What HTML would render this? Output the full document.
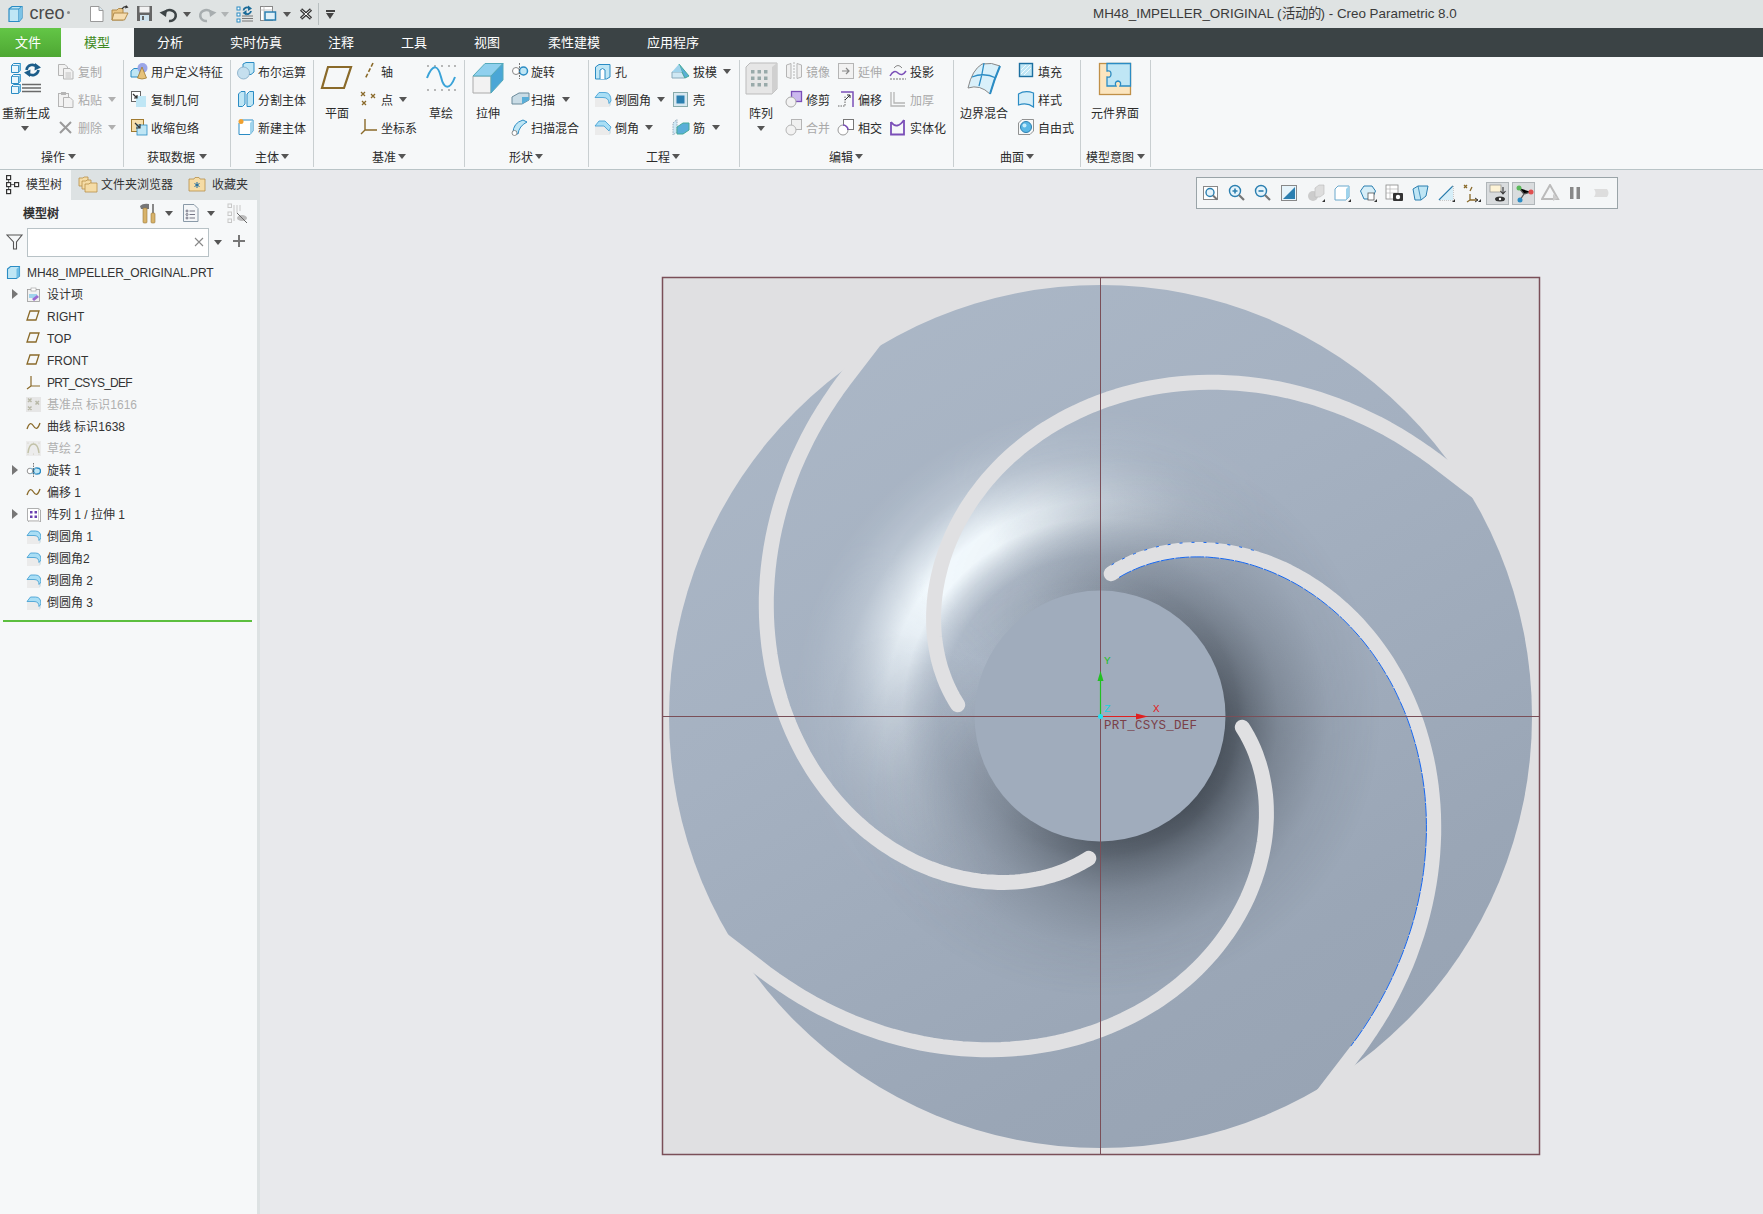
<!DOCTYPE html>
<html lang="zh-CN"><head><meta charset="utf-8"><style>
*{margin:0;padding:0;box-sizing:border-box}
html,body{width:1763px;height:1214px;overflow:hidden;background:#e8e9ec;font-family:"Liberation Sans",sans-serif;color:#333}
.abs{position:absolute}
#title{left:0;top:0;width:1763px;height:28px;background:#dfe3e3}
#tabs{left:0;top:28px;width:1763px;height:29px;background:#3b4345}
.tab{position:absolute;top:0;height:29px;line-height:29px;font-size:13px;color:#fff;text-align:center}
#ribbon{left:0;top:57px;width:1763px;height:113px;background:#f6f8f9;border-bottom:1px solid #b9c4c7}
.t{position:absolute;font-size:12px;line-height:14px;white-space:nowrap;color:#2b2b2b}
.tt{position:absolute;font-size:12px;line-height:16px;white-space:nowrap;color:#2b2b2b}
.g{color:#a9a9a9}
.dd{position:absolute;width:0;height:0;border-style:solid;border-width:5px 4px 0 4px;border-color:#555 transparent transparent transparent}
.sep{position:absolute;top:60px;width:1px;height:107px;background:#c9cfd1}
#left{left:0;top:170px;width:257px;height:1044px;background:#f6f8f9}
#lstrip{left:257px;top:170px;width:3px;height:1044px;background:#dde2e3}
#ltabs{left:0;top:170px;width:257px;height:30px;background:#dde2e3}
#disk{border-radius:50%;overflow:hidden;background:linear-gradient(150deg,#adb9c8 0%,#a5b1c1 38%,#9aa6b6 75%,#96a2b2 100%)}
#hl{left:calc(50% - 330px);top:calc(50% - 330px);width:660px;height:660px;
 background:conic-gradient(from 0deg, rgba(244,251,255,.45) 0deg, rgba(244,251,255,.15) 22deg, rgba(244,251,255,0) 45deg, rgba(244,251,255,0) 205deg, rgba(244,251,255,.05) 230deg, rgba(244,251,255,.17) 252deg, rgba(244,251,255,.42) 273deg, rgba(244,251,255,.82) 293deg, rgba(244,251,255,1) 308deg, rgba(244,251,255,1) 328deg, rgba(244,251,255,.75) 345deg, rgba(244,251,255,.45) 360deg);
 -webkit-mask-image:radial-gradient(circle closest-side, rgba(0,0,0,.08) 126px, rgba(0,0,0,.15) 160px, rgba(0,0,0,.52) 180px, #000 198px, #000 215px, rgba(0,0,0,.65) 235px, rgba(0,0,0,.27) 260px, rgba(0,0,0,.07) 290px, transparent 310px);mask-image:radial-gradient(circle closest-side, rgba(0,0,0,.08) 126px, rgba(0,0,0,.15) 160px, rgba(0,0,0,.52) 180px, #000 198px, #000 215px, rgba(0,0,0,.65) 235px, rgba(0,0,0,.27) 260px, rgba(0,0,0,.07) 290px, transparent 310px)}
#sh{left:calc(50% - 330px);top:calc(50% - 330px);width:660px;height:660px;
 background:conic-gradient(from 0deg, rgba(72,80,90,.3) 0deg, rgba(72,80,90,.58) 45deg, rgba(72,80,90,.95) 95deg, rgba(72,80,90,1) 135deg, rgba(72,80,90,.85) 180deg, rgba(72,80,90,.4) 225deg, rgba(72,80,90,.08) 270deg, rgba(72,80,90,0) 295deg, rgba(72,80,90,.12) 330deg, rgba(72,80,90,.3) 360deg);
 -webkit-mask-image:radial-gradient(circle closest-side, #000 125px, rgba(0,0,0,.9) 138px, rgba(0,0,0,.75) 148px, rgba(0,0,0,.42) 178px, rgba(0,0,0,.12) 228px, transparent 280px);mask-image:radial-gradient(circle closest-side, #000 125px, rgba(0,0,0,.9) 138px, rgba(0,0,0,.75) 148px, rgba(0,0,0,.42) 178px, rgba(0,0,0,.12) 228px, transparent 280px)}
</style></head><body>
<!-- TITLE BAR -->
<div id="title" class="abs">
 <svg class="abs" style="left:6px;top:5px" width="18" height="18" viewBox="0 0 18 18">
  <path d="M3 4 L6 1.5 L16 1.5 L16 13 L13 16.5 L3 16.5 Z" fill="#bfe6f5" stroke="#2b8cc4" stroke-width="1.2"/>
  <path d="M3 4 L13 4 L13 16.5 M13 4 L16 1.5" fill="none" stroke="#2b8cc4" stroke-width="1.2"/>
  <path d="M13 4 L16 1.5 L16 13 L13 16.5Z" fill="#7cc3e6"/>
 </svg>
 <div class="abs" style="left:29.5px;top:4px;font-size:18px;line-height:18px;color:#4a4a4a">creo</div>
 <div class="abs" style="left:66.5px;top:10.5px;width:3px;height:3px;border-radius:50%;background:#888"></div>
 <!-- new -->
 <svg class="abs" style="left:89px;top:5px" width="16" height="18"><path d="M1.5 1.5 H10 L14 5.5 V16.5 H1.5Z" fill="#fff" stroke="#999"/><path d="M10 1.5 V5.5 H14" fill="#d8e8f0" stroke="#999"/></svg>
 <!-- open -->
 <svg class="abs" style="left:111px;top:5px" width="19" height="17"><path d="M1 5 H6 L7.5 3.5 H12 V15 H1Z" fill="#e9c585" stroke="#b08a4a"/><path d="M3 8 H17 L13.5 15 H1Z" fill="#f6ddb0" stroke="#b08a4a"/><path d="M11 4 Q13 0.5 16 2" fill="none" stroke="#333" stroke-width="1.2"/><path d="M15 0 L17.5 2.5 L14 3.5Z" fill="#333"/></svg>
 <!-- save -->
 <svg class="abs" style="left:136px;top:5px" width="17" height="17"><rect x="1" y="1" width="15" height="15" fill="#666"/><rect x="3.5" y="1.5" width="10" height="6" fill="#f2f2f2"/><rect x="4" y="10" width="9" height="6" fill="#cfe3ee"/><rect x="6" y="11" width="2" height="4" fill="#666"/></svg>
 <!-- undo -->
 <svg class="abs" style="left:159px;top:6px" width="19" height="17"><path d="M5 8 A6 5.5 0 1 1 10 15" fill="none" stroke="#3d4446" stroke-width="2.6"/><path d="M0.5 6.5 L8 3.5 L7 11Z" fill="#3d4446"/></svg>
 <div class="abs dd" style="left:183px;top:12px;border-top-color:#555"></div>
 <!-- redo -->
 <svg class="abs" style="left:198px;top:6px" width="19" height="17"><path d="M14 8 A6 5.5 0 1 0 9 15" fill="none" stroke="#a7adaf" stroke-width="2.6"/><path d="M18.5 6.5 L11 3.5 L12 11Z" fill="#a7adaf"/></svg>
 <div class="abs dd" style="left:221px;top:12px;border-top-color:#b0b4b5"></div>
 <!-- regen -->
 <svg class="abs" style="left:236px;top:5px" width="18" height="18"><g fill="#fff" stroke="#2b8cc4" stroke-width="1"><rect x="1" y="2" width="3" height="3"/><rect x="1" y="8" width="3" height="3"/><rect x="1" y="14" width="3" height="3"/></g><path d="M6 11 H17 M6 13.5 H17 M6 16 H17" stroke="#777" stroke-width="1"/><path d="M7.5 5.5 A3.5 3.5 0 0 1 13.5 3.5" fill="none" stroke="#1a6a98" stroke-width="1.8"/><path d="M12 0.5 L16 3.5 L12 6Z" fill="#1a6a98"/><path d="M15 6 A3.5 3.5 0 0 1 9 8" fill="none" stroke="#1a6a98" stroke-width="1.8"/><path d="M10.5 5 L6.5 8 L10.5 10.5Z" fill="#1a6a98"/></svg>
 <!-- windows -->
 <svg class="abs" style="left:259px;top:5px" width="18" height="18"><rect x="1.5" y="1.5" width="12" height="14" fill="#fff" stroke="#888"/><path d="M1.5 5 H13.5 M5 1.5 V15.5" stroke="#bbb" stroke-width=".8"/><rect x="6" y="7" width="10.5" height="8" fill="#dff0f8" stroke="#2b7fb0" stroke-width="1.5"/></svg>
 <div class="abs dd" style="left:283px;top:12px;border-top-color:#555"></div>
 <!-- close -->
 <svg class="abs" style="left:299px;top:8px" width="14" height="12"><path d="M2 1.5 L12 10.5 M12 1.5 L2 10.5" stroke="#333" stroke-width="3.2"/><path d="M2.5 2 L11.5 10 M11.5 2 L2.5 10" stroke="#fff" stroke-width="1"/></svg>
 <div class="abs" style="left:318px;top:3px;width:1px;height:22px;background:#b8bfc0"></div>
 <div class="abs" style="left:326px;top:10px;width:9px;height:1.5px;background:#444"></div><div class="abs dd" style="left:326px;top:13px;border-top-color:#444;border-width:6px 4.5px 0 4.5px"></div>
 <div class="abs" style="left:1093px;top:6px;font-size:13.4px;line-height:16px;color:#3a3a3a;white-space:nowrap">MH48_IMPELLER_ORIGINAL (活动的) - Creo Parametric 8.0</div>
</div>
<!-- TABS -->
<div id="tabs" class="abs">
 <div class="tab" style="left:0;width:61px;padding-right:5px;background:linear-gradient(#63c646,#4ea733)">文件</div>
 <div class="tab" style="left:61px;width:73px;padding-right:2px;background:#f6f8f9;color:#3f8a22">模型</div>
 <div class="tab" style="left:150px;width:40px">分析</div>
 <div class="tab" style="left:222px;width:68px">实时仿真</div>
 <div class="tab" style="left:321px;width:40px">注释</div>
 <div class="tab" style="left:394px;width:40px">工具</div>
 <div class="tab" style="left:467px;width:40px">视图</div>
 <div class="tab" style="left:540px;width:68px">柔性建模</div>
 <div class="tab" style="left:639px;width:68px">应用程序</div>
</div>

<div id="ribbon" class="abs"></div>
<!-- RIBBON -->
<div class="abs" style="left:0;top:0;width:1763px;height:169px">
<div class="sep" style="left:123px"></div>
<div class="sep" style="left:230px"></div>
<div class="sep" style="left:313px"></div>
<div class="sep" style="left:464px"></div>
<div class="sep" style="left:588px"></div>
<div class="sep" style="left:739px"></div>
<div class="sep" style="left:953px"></div>
<div class="sep" style="left:1080px"></div>
<div class="sep" style="left:1150px"></div>
<div class="t" style="left:41px;top:150.5px">操作</div>
<div class="dd" style="left:68px;top:154px;border-top-color:#555"></div>
<div class="t" style="left:147px;top:150.5px">获取数据</div>
<div class="dd" style="left:199px;top:154px;border-top-color:#555"></div>
<div class="t" style="left:255px;top:150.5px">主体</div>
<div class="dd" style="left:281px;top:154px;border-top-color:#555"></div>
<div class="t" style="left:372px;top:150.5px">基准</div>
<div class="dd" style="left:398px;top:154px;border-top-color:#555"></div>
<div class="t" style="left:509px;top:150.5px">形状</div>
<div class="dd" style="left:535px;top:154px;border-top-color:#555"></div>
<div class="t" style="left:646px;top:150.5px">工程</div>
<div class="dd" style="left:672px;top:154px;border-top-color:#555"></div>
<div class="t" style="left:829px;top:150.5px">编辑</div>
<div class="dd" style="left:855px;top:154px;border-top-color:#555"></div>
<div class="t" style="left:1000px;top:150.5px">曲面</div>
<div class="dd" style="left:1026px;top:154px;border-top-color:#555"></div>
<div class="t" style="left:1086px;top:150.5px">模型意图</div>
<div class="dd" style="left:1137px;top:154px;border-top-color:#555"></div>
<div class="t" style="left:2.0px;top:106.5px;width:48px;text-align:center">重新生成</div>
<div class="t" style="left:325.0px;top:106.5px;width:24px;text-align:center">平面</div>
<div class="t" style="left:429.0px;top:106.5px;width:24px;text-align:center">草绘</div>
<div class="t" style="left:475.5px;top:106.5px;width:24px;text-align:center">拉伸</div>
<div class="t" style="left:749.0px;top:106.5px;width:24px;text-align:center">阵列</div>
<div class="t" style="left:960.0px;top:106.5px;width:48px;text-align:center">边界混合</div>
<div class="t" style="left:1090.5px;top:106.5px;width:48px;text-align:center">元件界面</div>
<div class="dd" style="left:21px;top:126px;border-top-color:#555"></div>
<div class="dd" style="left:757px;top:126px;border-top-color:#555"></div>
<div class="t g" style="left:78px;top:65.5px">复制</div>
<div class="t g" style="left:78px;top:93.5px">粘贴</div>
<div class="t g" style="left:78px;top:121.5px">删除</div>
<div class="t" style="left:151px;top:65.5px">用户定义特征</div>
<div class="t" style="left:151px;top:93.5px">复制几何</div>
<div class="t" style="left:151px;top:121.5px">收缩包络</div>
<div class="t" style="left:258px;top:65.5px">布尔运算</div>
<div class="t" style="left:258px;top:93.5px">分割主体</div>
<div class="t" style="left:258px;top:121.5px">新建主体</div>
<div class="t" style="left:381px;top:65.5px">轴</div>
<div class="t" style="left:381px;top:93.5px">点</div>
<div class="t" style="left:381px;top:121.5px">坐标系</div>
<div class="t" style="left:531px;top:65.5px">旋转</div>
<div class="t" style="left:531px;top:93.5px">扫描</div>
<div class="t" style="left:531px;top:121.5px">扫描混合</div>
<div class="t" style="left:615px;top:65.5px">孔</div>
<div class="t" style="left:615px;top:93.5px">倒圆角</div>
<div class="t" style="left:615px;top:121.5px">倒角</div>
<div class="t" style="left:693px;top:65.5px">拔模</div>
<div class="t" style="left:693px;top:93.5px">壳</div>
<div class="t" style="left:693px;top:121.5px">筋</div>
<div class="t g" style="left:806px;top:65.5px">镜像</div>
<div class="t" style="left:806px;top:93.5px">修剪</div>
<div class="t g" style="left:806px;top:121.5px">合并</div>
<div class="t g" style="left:858px;top:65.5px">延伸</div>
<div class="t" style="left:858px;top:93.5px">偏移</div>
<div class="t" style="left:858px;top:121.5px">相交</div>
<div class="t" style="left:910px;top:65.5px">投影</div>
<div class="t g" style="left:910px;top:93.5px">加厚</div>
<div class="t" style="left:910px;top:121.5px">实体化</div>
<div class="t" style="left:1038px;top:65.5px">填充</div>
<div class="t" style="left:1038px;top:93.5px">样式</div>
<div class="t" style="left:1038px;top:121.5px">自由式</div>
<div class="dd" style="left:108px;top:97px;border-top-color:#b0b0b0"></div>
<div class="dd" style="left:108px;top:125px;border-top-color:#b0b0b0"></div>
<div class="dd" style="left:399px;top:97px;border-top-color:#555"></div>
<div class="dd" style="left:562px;top:97px;border-top-color:#555"></div>
<div class="dd" style="left:657px;top:97px;border-top-color:#555"></div>
<div class="dd" style="left:645px;top:125px;border-top-color:#555"></div>
<div class="dd" style="left:723px;top:69px;border-top-color:#555"></div>
<div class="dd" style="left:712px;top:125px;border-top-color:#555"></div>
<svg class="abs" style="left:9px;top:62px" width="36" height="34" viewBox="0 0 36 34"><g transform="translate(2,1)"><path d="M0.5 2.5 L2.5 0.5 H9.5 V7.5 L7.5 9.5 H0.5Z" fill="#eaf7fd" stroke="#2b8cc4" stroke-width="1"/><path d="M7.5 2.5 L9.5 0.5 V7.5 L7.5 9.5Z" fill="#7cc3e6"/><path d="M0.5 2.5 H7.5 V9.5" fill="none" stroke="#2b8cc4" stroke-width=".8"/></g><g transform="translate(2,12)"><path d="M0.5 2.5 L2.5 0.5 H9.5 V7.5 L7.5 9.5 H0.5Z" fill="#eaf7fd" stroke="#2b8cc4" stroke-width="1"/><path d="M7.5 2.5 L9.5 0.5 V7.5 L7.5 9.5Z" fill="#7cc3e6"/><path d="M0.5 2.5 H7.5 V9.5" fill="none" stroke="#2b8cc4" stroke-width=".8"/></g><g transform="translate(2,22)"><path d="M0.5 2.5 L2.5 0.5 H9.5 V7.5 L7.5 9.5 H0.5Z" fill="#eaf7fd" stroke="#2b8cc4" stroke-width="1"/><path d="M7.5 2.5 L9.5 0.5 V7.5 L7.5 9.5Z" fill="#7cc3e6"/><path d="M0.5 2.5 H7.5 V9.5" fill="none" stroke="#2b8cc4" stroke-width=".8"/></g><path d="M13 22.5 H32 M13 26 H32 M13 29.5 H32" stroke="#6a6a6a" stroke-width="1.5"/><path d="M17.5 8 A6 6 0 0 1 28 5" fill="none" stroke="#1c5d8a" stroke-width="2.6"/><path d="M26 1 L32 5.5 L25.5 8.5Z" fill="#1c5d8a"/><path d="M29.5 8 A6 6 0 0 1 19 11" fill="none" stroke="#1c5d8a" stroke-width="2.6"/><path d="M21 15 L15 10.5 L21.5 7.5Z" fill="#1c5d8a"/></svg>
<svg class="abs" style="left:57px;top:63px" width="18" height="17" viewBox="0 0 18 17"><g fill="#f2f2f2" stroke="#b5b5b5"><path d="M1.5 1.5 H8 L10.5 4 V12.5 H1.5Z"/><path d="M6.5 5.5 H13 L16 8.5 V16 H6.5Z"/></g><path d="M8.5 10 H14 M8.5 12 H14 M8.5 14 H14" stroke="#b5b5b5" stroke-width=".8"/></svg>
<svg class="abs" style="left:57px;top:91px" width="18" height="17" viewBox="0 0 18 17"><g fill="#f2f2f2" stroke="#b5b5b5"><rect x="1.5" y="2.5" width="10" height="13"/><path d="M6.5 6.5 H13 L16 9.5 V16.5 H6.5Z"/></g><rect x="4" y="1" width="5" height="3" fill="#b5b5b5"/></svg>
<svg class="abs" style="left:58px;top:120px" width="15" height="15" viewBox="0 0 15 15"><path d="M2 2 L13 13 M13 2 L2 13" stroke="#9a9a9a" stroke-width="2"/></svg>
<svg class="abs" style="left:130px;top:62px" width="18" height="18" viewBox="0 0 18 18"><path d="M1 9 L4 6.5 H10 V15 H1Z" fill="#bfe6f5" stroke="#2b8cc4"/><circle cx="12.5" cy="6" r="5" fill="#9aa6e8"/><path d="M12 5 L16.5 16 Q12 18 7.5 16Z" fill="#e6c27a" stroke="#a07a30" stroke-width=".8"/></svg>
<svg class="abs" style="left:130px;top:90px" width="18" height="18" viewBox="0 0 18 18"><rect x="1.5" y="1.5" width="9" height="10" fill="#fff" stroke="#666"/><rect x="6" y="6" width="10" height="11" fill="#bfe6f5"/><path d="M3 4 L7 8 M7 5 V8 H4" stroke="#333" stroke-width="1.2" fill="none"/></svg>
<svg class="abs" style="left:130px;top:118px" width="18" height="18" viewBox="0 0 18 18"><rect x="1.5" y="1.5" width="12" height="12" fill="#f6dfae" stroke="#a07a30"/><rect x="7" y="7" width="10" height="10" fill="#bfe6f5" stroke="#2b8cc4" stroke-width=".8"/><path d="M5 5 L10 10 M10 6 V10 H6" stroke="#333" stroke-width="1.2" fill="none"/></svg>
<svg class="abs" style="left:237px;top:62px" width="18" height="18" viewBox="0 0 18 18"><path d="M6 2 L9 0.5 H17 V10 L14 12.5 H6Z" fill="#bfe6f5" stroke="#2b8cc4"/><circle cx="6.5" cy="11" r="6" fill="#c5dfee" stroke="#7fa8c4" stroke-width=".8"/></svg>
<svg class="abs" style="left:237px;top:90px" width="18" height="18" viewBox="0 0 18 18"><path d="M1.5 4 L4 1.5 H8 V14 L5.5 16.5 H1.5Z" fill="#bfe6f5" stroke="#2b8cc4"/><path d="M10 4 L12.5 1.5 H16.5 V14 L14 16.5 H10Z" fill="#bfe6f5" stroke="#2b8cc4"/></svg>
<svg class="abs" style="left:237px;top:118px" width="18" height="18" viewBox="0 0 18 18"><path d="M2 5 L5 2 H16 V13 L13 16.5 H2Z" fill="#fff" stroke="#2b8cc4"/><path d="M13 5 L16 2 V13 L13 16.5Z" fill="#9fd3ec"/><circle cx="4" cy="3.5" r="2.5" fill="#f0a030"/></svg>
<svg class="abs" style="left:320px;top:65px" width="33" height="26" viewBox="0 0 33 26"><path d="M8 2 H31 L24 23 H2Z" fill="none" stroke="#8a6a2a" stroke-width="2.2"/></svg>
<svg class="abs" style="left:362px;top:62px" width="14" height="18" viewBox="0 0 14 18"><path d="M11 1 L3 17" stroke="#8a6a2a" stroke-width="1.6" stroke-dasharray="4 2"/></svg>
<svg class="abs" style="left:360px;top:91px" width="18" height="16" viewBox="0 0 18 16"><g stroke="#8a6a2a" stroke-width="1.3"><path d="M1 1 L5 5 M5 1 L1 5"/><path d="M11 3 L15 7 M15 3 L11 7"/><path d="M2 10 L6 14 M6 10 L2 14"/></g></svg>
<svg class="abs" style="left:360px;top:118px" width="18" height="18" viewBox="0 0 18 18"><path d="M5 1 V12 H17 M5 12 L1 16" fill="none" stroke="#8a6a2a" stroke-width="1.4"/></svg>
<svg class="abs" style="left:425px;top:63px" width="32" height="30" viewBox="0 0 32 30"><g fill="#999"><circle cx="3" cy="3" r=".9"/><circle cx="10" cy="3" r=".9"/><circle cx="17" cy="3" r=".9"/><circle cx="24" cy="3" r=".9"/><circle cx="30" cy="3" r=".9"/><circle cx="3" cy="27" r=".9"/><circle cx="10" cy="27" r=".9"/><circle cx="17" cy="27" r=".9"/><circle cx="24" cy="27" r=".9"/><circle cx="30" cy="27" r=".9"/></g><path d="M2 15 C8 0 13 2 16 14 C19 27 25 27 30 14" fill="none" stroke="#3aa3d8" stroke-width="2"/></svg>
<svg class="abs" style="left:471px;top:62px" width="34" height="32" viewBox="0 0 34 32"><path d="M2 14 H20 V31 H2Z" fill="#f2f2f2" stroke="#aaa"/><path d="M2 14 L14 1.5 H32 L20 14Z" fill="#8fd0ee" stroke="#5ab"/><path d="M20 14 L32 1.5 V18 L20 31Z" fill="#4aa6d6" stroke="#5ab"/></svg>
<svg class="abs" style="left:511px;top:63px" width="18" height="16" viewBox="0 0 18 16"><circle cx="5" cy="8" r="3.5" fill="#fff" stroke="#888"/><circle cx="12.5" cy="8" r="4" fill="#bfe6f5" stroke="#2b8cc4" stroke-width="1.5"/><path d="M8.5 0 V16" stroke="#555" stroke-width=".8" stroke-dasharray="2 1"/></svg>
<svg class="abs" style="left:511px;top:91px" width="19" height="16" viewBox="0 0 19 16"><path d="M1 6 L8 2 H18 V9 L11 13 H1Z" fill="#c9dce6" stroke="#6a8a9a"/><path d="M11 6 H18 V9 L11 13Z" fill="#5aaed8"/></svg>
<svg class="abs" style="left:511px;top:118px" width="18" height="18" viewBox="0 0 18 18"><path d="M2 15 Q2 5 12 2 L16 4 Q8 8 7 16Z" fill="#bfe6f5" stroke="#2b8cc4"/><circle cx="3.5" cy="15" r="2.5" fill="#fff" stroke="#777" stroke-width=".8"/></svg>
<svg class="abs" style="left:594px;top:63px" width="18" height="17" viewBox="0 0 18 17"><path d="M1.5 4 L5 1.5 H16 V14 L12.5 16 H1.5Z" fill="#bfe6f5" stroke="#2b8cc4"/><path d="M6 16 V7 Q8.5 4 11 7 V16" fill="#fff" stroke="#2b8cc4"/></svg>
<svg class="abs" style="left:594px;top:90px" width="18" height="18" viewBox="0 0 18 18"><path d="M1 7.5 H9 Q15 7.5 15 13.5 V17 H1Z" fill="#ebebeb"/><path d="M15 13.5 L17 11 V15 L15 17Z" fill="#d6e3ea"/><path d="M1 7.5 L5 2.5 H11 Q17 2.5 17 11 L15 13.5 Q15 7.5 9 7.5Z" fill="#a9def5" stroke="#3a9ad0" stroke-width=".8"/></svg>
<svg class="abs" style="left:594px;top:118px" width="18" height="18" viewBox="0 0 18 18"><path d="M1 8 H10 L15 13 V17 H1Z" fill="#ebebeb"/><path d="M15 13 L17 11 V15 L15 17Z" fill="#d6e3ea"/><path d="M1 8 L5 3 H11 L17 9 L15 13 L10 8Z" fill="#a9def5" stroke="#3a9ad0" stroke-width=".8"/></svg>
<svg class="abs" style="left:671px;top:62px" width="19" height="17" viewBox="0 0 19 17"><path d="M1 10 H11 L14 16 H1Z" fill="#cfe8f4" stroke="#8ab"/><path d="M8 2 L18 14 L14 16 L11 10Z" fill="#5aaed8" stroke="#4a9"/><path d="M1 10 L8 2 L11 10Z" fill="#9fd3ec"/></svg>
<svg class="abs" style="left:672px;top:91px" width="17" height="17" viewBox="0 0 17 17"><rect x="1.5" y="1.5" width="14" height="14" fill="#d8e8f0" stroke="#8aa"/><rect x="4.5" y="4.5" width="8" height="8" fill="#2b7fb0"/></svg>
<svg class="abs" style="left:671px;top:118px" width="19" height="18" viewBox="0 0 19 18"><path d="M2 5 L6 1.5 V14 L2 17Z" fill="#cfe8f4" stroke="#9ab" stroke-dasharray="1.5 1"/><path d="M6 9 L12 5 H18 V12 L12 16 H6Z" fill="#5aaed8" stroke="#4a9"/></svg>
<svg class="abs" style="left:745px;top:62px" width="33" height="33" viewBox="0 0 33 33"><path d="M1 5 L5 1 H32 V27 L27 32 H1Z" fill="#e6e6e6" stroke="#bbb"/><path d="M27 5 L32 1 V27 L27 32Z" fill="#d0d0d0"/><rect x="6.0" y="8.0" width="3.5" height="3.5" fill="#9aa"/><rect x="12.5" y="8.0" width="3.5" height="3.5" fill="#9aa"/><rect x="19.0" y="8.0" width="3.5" height="3.5" fill="#9aa"/><rect x="6.0" y="14.5" width="3.5" height="3.5" fill="#9aa"/><rect x="12.5" y="14.5" width="3.5" height="3.5" fill="#9aa"/><rect x="19.0" y="14.5" width="3.5" height="3.5" fill="#9aa"/><rect x="6.0" y="21.0" width="3.5" height="3.5" fill="#9aa"/><rect x="12.5" y="21.0" width="3.5" height="3.5" fill="#9aa"/><rect x="19.0" y="21.0" width="3.5" height="3.5" fill="#9aa"/></svg>
<svg class="abs" style="left:785px;top:62px" width="18" height="18" viewBox="0 0 18 18"><path d="M1.5 3 L6 1.5 V16.5 L1.5 15Z M16.5 3 L12 1.5 V16.5 L16.5 15Z" fill="#f0f0f0" stroke="#b5b5b5"/><path d="M9 0 V18" stroke="#b5b5b5" stroke-dasharray="2 1"/></svg>
<svg class="abs" style="left:785px;top:90px" width="18" height="18" viewBox="0 0 18 18"><rect x="6.5" y="1.5" width="10" height="10" fill="#cbb8ee" stroke="#7b4fb8" stroke-width="1.3"/><circle cx="6" cy="12" r="5" fill="#f2f2f2" stroke="#aaa"/></svg>
<svg class="abs" style="left:785px;top:118px" width="18" height="18" viewBox="0 0 18 18"><rect x="6.5" y="1.5" width="10" height="10" fill="#f0f0f0" stroke="#b5b5b5"/><circle cx="6" cy="12" r="5" fill="#f2f2f2" stroke="#b5b5b5"/></svg>
<svg class="abs" style="left:837px;top:62px" width="18" height="18" viewBox="0 0 18 18"><rect x="1.5" y="1.5" width="15" height="15" fill="#f2f2f2" stroke="#b5b5b5"/><path d="M5 9 H12 M9 6 L12 9 L9 12" fill="none" stroke="#888" stroke-width="1.2"/></svg>
<svg class="abs" style="left:837px;top:90px" width="18" height="18" viewBox="0 0 18 18"><path d="M1 16 H8 V6" fill="none" stroke="#666" stroke-dasharray="1.5 1"/><path d="M4 2 H16 V17" fill="none" stroke="#7b4fb8" stroke-width="1.5"/><path d="M8 10 L13 5 M10 5 H13 V8" fill="none" stroke="#333"/></svg>
<svg class="abs" style="left:837px;top:118px" width="18" height="18" viewBox="0 0 18 18"><rect x="6.5" y="1.5" width="10" height="10" fill="#fff" stroke="#777"/><circle cx="6" cy="12" r="5" fill="#fff" stroke="#999"/><path d="M6 7 A5 5 0 0 1 11 12" fill="none" stroke="#7b4fb8" stroke-width="1.6"/></svg>
<svg class="abs" style="left:889px;top:62px" width="18" height="18" viewBox="0 0 18 18"><path d="M5 6 Q9 1 13 6" fill="none" stroke="#888"/><path d="M1 14 Q5 7 9 11 T17 9" fill="none" stroke="#7b4fb8" stroke-width="1.5"/><path d="M1 17 H17" stroke="#777" stroke-dasharray="2 1"/></svg>
<svg class="abs" style="left:889px;top:90px" width="18" height="18" viewBox="0 0 18 18"><path d="M2 2 V16 H16 M5 2 V13 H16" fill="none" stroke="#b5b5b5" stroke-width="1.3"/></svg>
<svg class="abs" style="left:889px;top:118px" width="18" height="18" viewBox="0 0 18 18"><path d="M2 4 V16.5 H15 V2" fill="none" stroke="#7b4fb8" stroke-width="1.8"/><path d="M2 4 Q8 12 15 2" fill="none" stroke="#7b4fb8" stroke-width="1.8"/></svg>
<svg class="abs" style="left:966px;top:62px" width="36" height="34" viewBox="0 0 36 34"><path d="M2 26 Q6 8 16 2 Q26 0 34 4 Q28 18 24 32 Q14 22 2 26Z" fill="#d9f0fa" stroke="#888"/><path d="M6 15 Q18 10 30 16 M18 1 Q16 14 13 24" fill="none" stroke="#2b8cc4" stroke-width="1.3"/><path d="M34 4 Q28 18 24 32" fill="none" stroke="#2b8cc4" stroke-width="2"/></svg>
<svg class="abs" style="left:1018px;top:62px" width="16" height="16" viewBox="0 0 16 16"><rect x="1.5" y="1.5" width="13" height="13" fill="#bfe6f5" stroke="#1c6fa0" stroke-width="1.4"/><path d="M3 8 L8 3 M3 12 L12 3 M6 13 L13 6" stroke="#fff" stroke-width=".8"/></svg>
<svg class="abs" style="left:1017px;top:90px" width="18" height="18" viewBox="0 0 18 18"><path d="M1.5 4 Q8 0 16.5 3 V17 Q10 12 1.5 15Z" fill="#d6eef8" stroke="#2b8cc4" stroke-width="1.2"/></svg>
<svg class="abs" style="left:1017px;top:118px" width="18" height="18" viewBox="0 0 18 18"><path d="M1.5 5 L5 1.5 H16.5 V13 L13 16.5 H1.5Z" fill="none" stroke="#777" stroke-width=".8"/><circle cx="9" cy="9" r="5.5" fill="#5ab8e6" stroke="#2b7fb0"/><circle cx="7.5" cy="7.5" r="2" fill="#c6ecfa"/></svg>
<svg class="abs" style="left:1098px;top:62px" width="34" height="34" viewBox="0 0 34 34"><rect x="1.5" y="1.5" width="31" height="31" fill="#fbe5bf" stroke="#c09048" stroke-width="1.3"/><path d="M9 1.5 H32.5 V24 H22 Q24 20 20 19 Q16 20 18 24 H9 V15 Q13 16 13 12 Q13 8 9 9Z" fill="#bfe6f5" stroke="#2b8cc4" stroke-width="1.3"/></svg>
</div>

<div id="left" class="abs"></div>
<div id="ltabs" class="abs"></div>
<div id="lstrip" class="abs"></div>
<!-- LEFT PANEL -->
<div class="abs" style="left:0;top:170px;width:71px;height:30px;background:#f6f8f9"></div>
<svg class="abs" style="left:5px;top:174px" width="15" height="21" viewBox="0 0 15 21"><g fill="#fff" stroke="#333" stroke-width="1.2"><rect x="1.6" y="1.6" width="4" height="4"/><rect x="1.6" y="8.6" width="4" height="4"/><rect x="1.6" y="15.6" width="4" height="4"/><rect x="9.6" y="8.6" width="4" height="4"/></g><path d="M3.6 5.6 V8.6 M3.6 12.6 V15.6 M5.6 10.6 H9.6" stroke="#333" stroke-width=".8"/></svg>
<div class="tt" style="left:26px;top:177px;color:#333;">模型树</div>
<svg class="abs" style="left:78px;top:175px" width="20" height="18" viewBox="0 0 20 18"><g fill="#f5dca6" stroke="#b8904a" stroke-width=".8"><path d="M1 3 H5 L6 2 H10 V11 H1Z"/><path d="M4 6 H8 L9 5 H13 V14 H4Z"/><path d="M7 9 H11 L12 8 H19 V17 H7Z"/></g></svg>
<div class="tt" style="left:101px;top:177px;color:#333;">文件夹浏览器</div>
<svg class="abs" style="left:188px;top:175px" width="18" height="18" viewBox="0 0 18 18"><path d="M1 4 H6 L7 2.5 H11 L12 4 H17 V16 H1Z" fill="#f5dca6" stroke="#b8904a" stroke-width=".8"/><path d="M9 7 V13 M6.5 8.5 L11.5 11.5 M11.5 8.5 L6.5 11.5" stroke="#1a6aa0" stroke-width="1"/></svg>
<div class="tt" style="left:212px;top:177px;color:#333;">收藏夹</div>
<div class="tt" style="left:23px;top:206px;color:#333;font-weight:bold">模型树</div>
<svg class="abs" style="left:139px;top:203px" width="20" height="21" viewBox="0 0 20 21"><path d="M1 3 Q4 0 10 1 V6 H2Z" fill="#777"/><rect x="4" y="5" width="4" height="15" rx="1" fill="#d8b36a" stroke="#9a7a3a" stroke-width=".6"/><rect x="13" y="1" width="2" height="10" fill="#888"/><rect x="12" y="10" width="4" height="10" rx="1" fill="#d8b36a" stroke="#9a7a3a" stroke-width=".6"/></svg>
<div class="dd" style="left:165px;top:211px"></div>
<svg class="abs" style="left:182px;top:203px" width="18" height="20" viewBox="0 0 18 20"><path d="M1.5 1.5 H12 L16 5.5 V18.5 H1.5Z" fill="#f4f6f8" stroke="#8a9aa8"/><g fill="none" stroke="#667" stroke-width=".9"><circle cx="5" cy="8" r="1"/><circle cx="5" cy="11.5" r="1"/><circle cx="5" cy="15" r="1"/><path d="M7.5 8 H13 M7.5 11.5 H13 M7.5 15 H13"/></g></svg>
<div class="dd" style="left:207px;top:211px"></div>
<svg class="abs" style="left:227px;top:203px" width="22" height="21" viewBox="0 0 22 21"><g fill="none" stroke="#c8c8c8" stroke-width="1"><rect x="1" y="1" width="3.5" height="3.5"/><rect x="1" y="9" width="3.5" height="3.5"/><rect x="1" y="16" width="3.5" height="3.5"/><path d="M7 2 V18 M10 2 V10 M13 2 V8"/></g><ellipse cx="15" cy="15" rx="5" ry="3" fill="#bbb"/><path d="M10 10 L20 20" stroke="#666" stroke-width="1"/></svg>
<svg class="abs" style="left:6px;top:233px" width="18" height="18" viewBox="0 0 18 18"><path d="M1 2 H16 L10.5 9 V16 H7.5 V9Z" fill="none" stroke="#555" stroke-width="1.1"/></svg>
<div class="abs" style="left:27px;top:228px;width:182px;height:29px;background:#fff;border:1px solid #b8c2c6"></div>
<svg class="abs" style="left:194px;top:237px" width="10" height="10" viewBox="0 0 10 10"><path d="M1 1 L9 9 M9 1 L1 9" stroke="#888" stroke-width="1.1"/></svg>
<div class="dd" style="left:214px;top:240px;border-width:5px 4px 0 4px"></div>
<svg class="abs" style="left:233px;top:235px" width="12" height="12" viewBox="0 0 12 12"><path d="M6 0 V12 M0 6 H12" stroke="#777" stroke-width="2"/></svg>
<svg class="abs" style="left:6px;top:265px" width="15" height="15" viewBox="0 0 15 15"><path d="M1.5 4 L4.5 1.5 H13.5 V11 L10.5 13.5 H1.5Z" fill="#bfe6f5" stroke="#2b8cc4" stroke-width="1.1"/><path d="M10.5 4 L13.5 1.5 V11 L10.5 13.5Z" fill="#6fbde6"/></svg>
<div class="tt" style="left:27px;top:265px;color:#333;"><span style="letter-spacing:-0.1px">MH48_IMPELLER_ORIGINAL.PRT</span></div>
<svg class="abs" style="left:11px;top:289px" width="8" height="10" viewBox="0 0 8 10"><path d="M1 0 L7 5 L1 10Z" fill="#777"/></svg>
<svg class="abs" style="left:26px;top:287px" width="15" height="15" viewBox="0 0 15 15"><rect x="1.5" y="2.5" width="12" height="12" fill="#f2f2f2" stroke="#999" stroke-width=".8"/><rect x="5" y="1" width="5" height="3" fill="#fff" stroke="#999" stroke-width=".6"/><rect x="3" y="7" width="8" height="4" fill="#9fd3ec"/><path d="M6 12 L11 8 L13 10 L8 14Z" fill="#9a6ad0"/></svg>
<div class="tt" style="left:47px;top:287px;color:#333;">设计项</div>
<svg class="abs" style="left:26px;top:309px" width="15" height="15" viewBox="0 0 15 15"><path d="M4 2 H13 L10 11 H1Z" fill="none" stroke="#8a6a2a" stroke-width="1.3"/></svg>
<div class="tt" style="left:47px;top:309px;color:#333;">RIGHT</div>
<svg class="abs" style="left:26px;top:331px" width="15" height="15" viewBox="0 0 15 15"><path d="M4 2 H13 L10 11 H1Z" fill="none" stroke="#8a6a2a" stroke-width="1.3"/></svg>
<div class="tt" style="left:47px;top:331px;color:#333;">TOP</div>
<svg class="abs" style="left:26px;top:353px" width="15" height="15" viewBox="0 0 15 15"><path d="M4 2 H13 L10 11 H1Z" fill="none" stroke="#8a6a2a" stroke-width="1.3"/></svg>
<div class="tt" style="left:47px;top:353px;color:#333;">FRONT</div>
<svg class="abs" style="left:26px;top:375px" width="15" height="15" viewBox="0 0 15 15"><path d="M5 1 V11 H14 M5 11 L1 14" fill="none" stroke="#8a6a2a" stroke-width="1.2"/></svg>
<div class="tt" style="left:47px;top:375px;color:#333;"><span style="letter-spacing:-0.75px">PRT_CSYS_DEF</span></div>
<svg class="abs" style="left:26px;top:397px" width="15" height="15" viewBox="0 0 15 15"><rect x="0" y="0" width="15" height="15" fill="#e6e6e6"/><g stroke="#b8b8a8" stroke-width="1.5"><path d="M2 1.5 L5.5 5 M5.5 1.5 L2 5 M9.5 4 L13 7.5 M13 4 L9.5 7.5 M2 9.5 L5.5 13 M5.5 9.5 L2 13"/></g></svg>
<div class="tt" style="left:47px;top:397px;color:#b0b0b0;">基准点 标识1616</div>
<svg class="abs" style="left:26px;top:419px" width="15" height="15" viewBox="0 0 15 15"><path d="M1 10 Q4 1 7.5 7 Q11 13 14 4" fill="none" stroke="#8a6a2a" stroke-width="1.3"/></svg>
<div class="tt" style="left:47px;top:419px;color:#333;">曲线 标识1638</div>
<svg class="abs" style="left:26px;top:441px" width="15" height="15" viewBox="0 0 15 15"><rect x="0" y="0" width="15" height="15" fill="#ececec"/><g fill="#c8c8b8"><circle cx="2" cy="2" r=".6"/><circle cx="7.5" cy="2" r=".6"/><circle cx="13" cy="2" r=".6"/><circle cx="2" cy="13" r=".6"/><circle cx="7.5" cy="13" r=".6"/><circle cx="13" cy="13" r=".6"/></g><path d="M2 12 Q3 3 7.5 3 Q12 3 13 12" fill="none" stroke="#c2c2a8" stroke-width="1.5"/></svg>
<div class="tt" style="left:47px;top:441px;color:#b0b0b0;">草绘 2</div>
<svg class="abs" style="left:11px;top:465px" width="8" height="10" viewBox="0 0 8 10"><path d="M1 0 L7 5 L1 10Z" fill="#777"/></svg>
<svg class="abs" style="left:26px;top:463px" width="15" height="15" viewBox="0 0 15 15"><circle cx="4" cy="8" r="2.8" fill="#fff" stroke="#888" stroke-width=".9"/><ellipse cx="11" cy="8" rx="3.5" ry="3" fill="#bfe6f5" stroke="#2b8cc4" stroke-width="1.4"/><path d="M4 5.5 H11 M4 10.5 H11" stroke="#7fb7d6" stroke-width=".8"/><path d="M7.5 0 V16" stroke="#444" stroke-width=".7" stroke-dasharray="1.5 1"/></svg>
<div class="tt" style="left:47px;top:463px;color:#333;">旋转 1</div>
<svg class="abs" style="left:26px;top:485px" width="15" height="15" viewBox="0 0 15 15"><path d="M1 10 Q4 1 7.5 7 Q11 13 14 4" fill="none" stroke="#8a6a2a" stroke-width="1.3"/></svg>
<div class="tt" style="left:47px;top:485px;color:#333;">偏移 1</div>
<svg class="abs" style="left:11px;top:509px" width="8" height="10" viewBox="0 0 8 10"><path d="M1 0 L7 5 L1 10Z" fill="#777"/></svg>
<svg class="abs" style="left:26px;top:507px" width="15" height="15" viewBox="0 0 15 15"><path d="M1.5 1.5 H12.5 L14.5 3 V15 H3 L1.5 13.5Z" fill="#fff" stroke="#9a9a9a" stroke-width=".8"/><path d="M12.5 1.5 V13.5 H1.5 M12.5 13.5 L14.5 15" fill="none" stroke="#b0b0b0" stroke-width=".6"/><g fill="#6a3fb0"><rect x="4" y="4" width="2.5" height="2.5"/><rect x="8.5" y="4" width="2.5" height="2.5"/><rect x="4" y="8.5" width="2.5" height="2.5"/><rect x="8.5" y="8.5" width="2.5" height="2.5"/></g></svg>
<div class="tt" style="left:47px;top:507px;color:#333;">阵列 1 / 拉伸 1</div>
<svg class="abs" style="left:26px;top:529px" width="15" height="15" viewBox="0 0 15 15"><path d="M1 6.5 H8 Q13 6.5 13 11.5 V15 H1Z" fill="#ebebeb"/><path d="M13 11.5 L15 9 V13 L13 15Z" fill="#d6e3ea"/><path d="M1 6.5 L4.5 2 H9.5 Q15 2 15 9 L13 11.5 Q13 6.5 8 6.5Z" fill="#a9def5" stroke="#3a9ad0" stroke-width=".8"/></svg>
<div class="tt" style="left:47px;top:529px;color:#333;">倒圆角 1</div>
<svg class="abs" style="left:26px;top:551px" width="15" height="15" viewBox="0 0 15 15"><path d="M1 6.5 H8 Q13 6.5 13 11.5 V15 H1Z" fill="#ebebeb"/><path d="M13 11.5 L15 9 V13 L13 15Z" fill="#d6e3ea"/><path d="M1 6.5 L4.5 2 H9.5 Q15 2 15 9 L13 11.5 Q13 6.5 8 6.5Z" fill="#a9def5" stroke="#3a9ad0" stroke-width=".8"/></svg>
<div class="tt" style="left:47px;top:551px;color:#333;">倒圆角2</div>
<svg class="abs" style="left:26px;top:573px" width="15" height="15" viewBox="0 0 15 15"><path d="M1 6.5 H8 Q13 6.5 13 11.5 V15 H1Z" fill="#ebebeb"/><path d="M13 11.5 L15 9 V13 L13 15Z" fill="#d6e3ea"/><path d="M1 6.5 L4.5 2 H9.5 Q15 2 15 9 L13 11.5 Q13 6.5 8 6.5Z" fill="#a9def5" stroke="#3a9ad0" stroke-width=".8"/></svg>
<div class="tt" style="left:47px;top:573px;color:#333;">倒圆角 2</div>
<svg class="abs" style="left:26px;top:595px" width="15" height="15" viewBox="0 0 15 15"><path d="M1 6.5 H8 Q13 6.5 13 11.5 V15 H1Z" fill="#ebebeb"/><path d="M13 11.5 L15 9 V13 L13 15Z" fill="#d6e3ea"/><path d="M1 6.5 L4.5 2 H9.5 Q15 2 15 9 L13 11.5 Q13 6.5 8 6.5Z" fill="#a9def5" stroke="#3a9ad0" stroke-width=".8"/></svg>
<div class="tt" style="left:47px;top:595px;color:#333;">倒圆角 3</div>
<div class="abs" style="left:3px;top:620px;width:249px;height:2px;background:#5cbf3f"></div>


<svg class="abs" style="left:0;top:0" width="1763" height="1214">
 <rect x="662.5" y="277.5" width="877" height="877" fill="#e0e0e2" stroke="#7a4f58" stroke-width="1.5"/>
</svg>
<div class="abs" id="disk" style="left:668.5px;top:284.5px;width:863.0px;height:863.0px">
 <div class="abs" id="hl"></div>
 <div class="abs" id="sh"></div>
</div>
<svg class="abs" style="left:0;top:0" width="1763" height="1214">
 <circle cx="1100" cy="716" r="125.5" fill="#a0acbc"/>
 <g fill="none" stroke="#e0e0e2" stroke-width="15" stroke-linecap="round" stroke-linejoin="round"><path d="M1111.2 573.7 L1115.2 571.2 L1119.4 568.8 L1123.7 566.5 L1128.1 564.4 L1132.7 562.3 L1137.3 560.4 L1142.2 558.7 L1147.1 557.0 L1152.1 555.6 L1157.3 554.2 L1162.5 553.1 L1167.9 552.1 L1173.4 551.2 L1178.9 550.5 L1184.6 550.0 L1190.3 549.7 L1196.1 549.6 L1202.0 549.6 L1207.9 549.9 L1213.9 550.3 L1219.9 550.9 L1226.0 551.7 L1232.2 552.8 L1238.3 554.0 L1244.5 555.5 L1250.8 557.1 L1257.0 559.0 L1263.3 561.1 L1269.5 563.4 L1275.7 565.9 L1282.0 568.6 L1288.2 571.6 L1294.4 574.8 L1300.5 578.2 L1306.6 581.8 L1312.7 585.7 L1318.7 589.8 L1324.6 594.1 L1330.5 598.6 L1336.2 603.3 L1341.9 608.3 L1347.5 613.5 L1353.0 618.9 L1358.3 624.5 L1363.5 630.4 L1368.6 636.4 L1373.6 642.7 L1378.4 649.2 L1383.1 655.8 L1387.6 662.7 L1391.9 669.8 L1396.1 677.0 L1400.0 684.5 L1403.8 692.1 L1407.4 699.9 L1410.8 707.9 L1414.0 716.0 L1417.0 724.3 L1419.7 732.8 L1422.2 741.4 L1424.5 750.1 L1426.6 759.0 L1428.4 768.0 L1429.9 777.1 L1431.2 786.4 L1432.2 795.8 L1433.0 805.2 L1433.5 814.8 L1433.7 824.4 L1433.7 834.2 L1433.3 844.0 L1432.7 853.8 L1431.8 863.7 L1430.6 873.7 L1429.1 883.7 L1427.3 893.7 L1425.2 903.8 L1422.8 913.8 L1420.1 923.9 L1417.1 933.9 L1413.7 943.9 L1410.1 953.9 L1406.2 963.9 L1401.9 973.8 L1397.3 983.7 L1392.5 993.5 L1387.3 1003.3 L1381.8 1012.9 L1375.9 1022.5 L1369.8 1031.9 L1363.4 1041.3 L1356.7 1050.5 L1311.8 1109.1"/><path d="M1242.3 727.2 L1244.8 731.2 L1247.2 735.4 L1249.5 739.7 L1251.6 744.1 L1253.7 748.7 L1255.6 753.3 L1257.3 758.2 L1259.0 763.1 L1260.4 768.1 L1261.8 773.3 L1262.9 778.5 L1263.9 783.9 L1264.8 789.4 L1265.5 794.9 L1266.0 800.6 L1266.3 806.3 L1266.4 812.1 L1266.4 818.0 L1266.1 823.9 L1265.7 829.9 L1265.1 835.9 L1264.3 842.0 L1263.2 848.2 L1262.0 854.3 L1260.5 860.5 L1258.9 866.8 L1257.0 873.0 L1254.9 879.3 L1252.6 885.5 L1250.1 891.7 L1247.4 898.0 L1244.4 904.2 L1241.2 910.4 L1237.8 916.5 L1234.2 922.6 L1230.3 928.7 L1226.2 934.7 L1221.9 940.6 L1217.4 946.5 L1212.7 952.2 L1207.7 957.9 L1202.5 963.5 L1197.1 969.0 L1191.5 974.3 L1185.6 979.5 L1179.6 984.6 L1173.3 989.6 L1166.8 994.4 L1160.2 999.1 L1153.3 1003.6 L1146.2 1007.9 L1139.0 1012.1 L1131.5 1016.0 L1123.9 1019.8 L1116.1 1023.4 L1108.1 1026.8 L1100.0 1030.0 L1091.7 1033.0 L1083.2 1035.7 L1074.6 1038.2 L1065.9 1040.5 L1057.0 1042.6 L1048.0 1044.4 L1038.9 1045.9 L1029.6 1047.2 L1020.2 1048.2 L1010.8 1049.0 L1001.2 1049.5 L991.6 1049.7 L981.8 1049.7 L972.0 1049.3 L962.2 1048.7 L952.3 1047.8 L942.3 1046.6 L932.3 1045.1 L922.3 1043.3 L912.3 1041.2 L902.2 1038.8 L892.1 1036.1 L882.1 1033.1 L872.1 1029.7 L862.1 1026.1 L852.1 1022.2 L842.2 1017.9 L832.3 1013.3 L822.5 1008.5 L812.7 1003.3 L803.1 997.8 L793.5 991.9 L784.1 985.8 L774.7 979.4 L765.5 972.7 L706.9 927.8"/><path d="M1088.8 858.3 L1084.8 860.8 L1080.6 863.2 L1076.3 865.5 L1071.9 867.6 L1067.3 869.7 L1062.7 871.6 L1057.8 873.3 L1052.9 875.0 L1047.9 876.4 L1042.7 877.8 L1037.5 878.9 L1032.1 879.9 L1026.6 880.8 L1021.1 881.5 L1015.4 882.0 L1009.7 882.3 L1003.9 882.4 L998.0 882.4 L992.1 882.1 L986.1 881.7 L980.1 881.1 L974.0 880.3 L967.8 879.2 L961.7 878.0 L955.5 876.5 L949.2 874.9 L943.0 873.0 L936.7 870.9 L930.5 868.6 L924.3 866.1 L918.0 863.4 L911.8 860.4 L905.6 857.2 L899.5 853.8 L893.4 850.2 L887.3 846.3 L881.3 842.2 L875.4 837.9 L869.5 833.4 L863.8 828.7 L858.1 823.7 L852.5 818.5 L847.0 813.1 L841.7 807.5 L836.5 801.6 L831.4 795.6 L826.4 789.3 L821.6 782.8 L816.9 776.2 L812.4 769.3 L808.1 762.2 L803.9 755.0 L800.0 747.5 L796.2 739.9 L792.6 732.1 L789.2 724.1 L786.0 716.0 L783.0 707.7 L780.3 699.2 L777.8 690.6 L775.5 681.9 L773.4 673.0 L771.6 664.0 L770.1 654.9 L768.8 645.6 L767.8 636.2 L767.0 626.8 L766.5 617.2 L766.3 607.6 L766.3 597.8 L766.7 588.0 L767.3 578.2 L768.2 568.3 L769.4 558.3 L770.9 548.3 L772.7 538.3 L774.8 528.2 L777.2 518.2 L779.9 508.1 L782.9 498.1 L786.3 488.1 L789.9 478.1 L793.8 468.1 L798.1 458.2 L802.7 448.3 L807.5 438.5 L812.7 428.7 L818.2 419.1 L824.1 409.5 L830.2 400.1 L836.6 390.7 L843.3 381.5 L888.2 322.9"/><path d="M957.7 704.8 L955.2 700.8 L952.8 696.6 L950.5 692.3 L948.4 687.9 L946.3 683.3 L944.4 678.7 L942.7 673.8 L941.0 668.9 L939.6 663.9 L938.2 658.7 L937.1 653.5 L936.1 648.1 L935.2 642.6 L934.5 637.1 L934.0 631.4 L933.7 625.7 L933.6 619.9 L933.6 614.0 L933.9 608.1 L934.3 602.1 L934.9 596.1 L935.7 590.0 L936.8 583.8 L938.0 577.7 L939.5 571.5 L941.1 565.2 L943.0 559.0 L945.1 552.7 L947.4 546.5 L949.9 540.3 L952.6 534.0 L955.6 527.8 L958.8 521.6 L962.2 515.5 L965.8 509.4 L969.7 503.3 L973.7 497.3 L978.1 491.4 L982.6 485.5 L987.3 479.8 L992.3 474.1 L997.5 468.5 L1002.9 463.0 L1008.5 457.7 L1014.4 452.5 L1020.4 447.4 L1026.7 442.4 L1033.2 437.6 L1039.8 432.9 L1046.7 428.4 L1053.8 424.1 L1061.0 419.9 L1068.5 416.0 L1076.1 412.2 L1083.9 408.6 L1091.9 405.2 L1100.0 402.0 L1108.3 399.0 L1116.8 396.3 L1125.4 393.8 L1134.1 391.5 L1143.0 389.4 L1152.0 387.6 L1161.1 386.1 L1170.4 384.8 L1179.8 383.8 L1189.2 383.0 L1198.8 382.5 L1208.4 382.3 L1218.2 382.3 L1228.0 382.7 L1237.8 383.3 L1247.7 384.2 L1257.7 385.4 L1267.7 386.9 L1277.7 388.7 L1287.8 390.8 L1297.8 393.2 L1307.9 395.9 L1317.9 398.9 L1327.9 402.3 L1337.9 405.9 L1347.9 409.8 L1357.8 414.1 L1367.7 418.7 L1377.5 423.5 L1387.3 428.7 L1396.9 434.2 L1406.5 440.1 L1415.9 446.2 L1425.3 452.6 L1434.5 459.3 L1493.1 504.2"/></g>
 <path d="M1119.0 577.5 L1122.9 575.2 L1127.0 573.0 L1131.2 571.0 L1135.5 569.1 L1140.0 567.2 L1144.5 565.6 L1149.2 564.0 L1154.1 562.6 L1159.0 561.3 L1164.0 560.2 L1169.1 559.3 L1174.4 558.4 L1179.7 557.8 L1185.1 557.3 L1190.6 557.0 L1196.1 556.9 L1201.8 556.9 L1207.5 557.1 L1213.2 557.6 L1219.1 558.2 L1224.9 559.0 L1230.8 560.0 L1236.8 561.1 L1242.8 562.5 L1248.8 564.1 L1254.8 565.9 L1260.8 568.0 L1266.9 570.2 L1272.9 572.6 L1278.9 575.3 L1284.9 578.1 L1290.9 581.2 L1296.9 584.5 L1302.8 588.0 L1308.6 591.8 L1314.5 595.7 L1320.2 599.9 L1325.9 604.3 L1331.5 608.9 L1337.0 613.7 L1342.4 618.7 L1347.7 624.0 L1352.9 629.5 L1358.0 635.1 L1363.0 641.0 L1367.8 647.1 L1372.5 653.4 L1377.0 659.9 L1381.4 666.6 L1385.6 673.5 L1389.7 680.5 L1393.6 687.8 L1397.2 695.2 L1400.7 702.8 L1404.1 710.6 L1407.2 718.5 L1410.1 726.6 L1412.7 734.9 L1415.2 743.3 L1417.4 751.8 L1419.4 760.5 L1421.2 769.3 L1422.7 778.2 L1424.0 787.3 L1425.0 796.4 L1425.7 805.7 L1426.2 815.0 L1426.4 824.5 L1426.4 834.0 L1426.0 843.6 L1425.4 853.2 L1424.5 862.9 L1423.4 872.7 L1421.9 882.5 L1420.1 892.3 L1418.1 902.1 L1415.7 912.0 L1413.1 921.8 L1410.1 931.7 L1406.8 941.5 L1403.3 951.3 L1399.4 961.1 L1395.2 970.9 L1390.8 980.5 L1386.0 990.2 L1380.9 999.7 L1375.5 1009.2 L1369.8 1018.6 L1363.8 1027.9 L1357.5 1037.0 L1350.8 1046.1" fill="none" stroke="#1566f0" stroke-width="1" stroke-dasharray="14 1"/>
 <path d="M1111.5 564.9 L1115.9 562.4 L1120.4 560.0 L1125.0 557.8 L1129.8 555.6 L1134.7 553.6 L1139.8 551.8 L1144.9 550.1 L1150.2 548.5 L1155.6 547.1 L1161.1 545.9 L1166.7 544.9 L1172.4 544.0 L1178.2 543.3 L1184.1 542.8 L1190.0 542.4 L1196.0 542.3 L1202.1 542.3 L1208.3 542.6 L1214.5 543.0 L1220.8 543.7 L1227.1 544.5 L1233.5 545.6 L1239.9 546.9 L1246.3 548.4 L1252.8 550.1 L1259.2 552.0" fill="none" stroke="#1566f0" stroke-width="1" stroke-dasharray="3 9"/>
 <line x1="662" y1="716.5" x2="1539" y2="716.5" stroke="#7a4f58" stroke-width="1"/>
 <line x1="1100.5" y1="277" x2="1100.5" y2="1154" stroke="#7a4f58" stroke-width="1"/>
 <!-- CSYS -->
 <path d="M1100.5 716 V676" stroke="#22c022" stroke-width="1.2"/>
 <path d="M1100.5 671 L1097.5 681 H1103.5Z" fill="#22c022"/>
 <path d="M1100 716.5 H1143" stroke="#e02020" stroke-width="1.2"/>
 <path d="M1148 716.5 L1136 713.5 V719.5Z" fill="#e02020"/>
 <circle cx="1100.5" cy="716.5" r="2.5" fill="#22e0f0"/>
 <text x="1104" y="664" font-family="Liberation Mono" font-size="11" fill="#22c022">Y</text>
 <text x="1104" y="712" font-family="Liberation Mono" font-size="11" fill="#22d0e0">Z</text>
 <text x="1153" y="712" font-family="Liberation Mono" font-size="11" fill="#e02020">X</text>
 <text x="1104" y="729" font-family="Liberation Mono" font-size="12.5" fill="#7a3f48" textLength="93">PRT_CSYS_DEF</text>
</svg>
<div class="abs" style="left:1196px;top:177px;width:422px;height:32px;background:#f4f6f7;border:1px solid #9aa4a8"></div>
<div class="abs" style="left:1486px;top:182px;width:23px;height:23px;background:#d9dcde;border:1px solid #b0b6b9"></div>
<div class="abs" style="left:1512px;top:182px;width:23px;height:23px;background:#d9dcde;border:1px solid #b0b6b9"></div>
<svg class="abs" style="left:1202px;top:184px" width="19" height="19" viewBox="0 0 19 19"><rect x="1.5" y="2.5" width="14" height="13" fill="#fff" stroke="#888"/><circle cx="8" cy="8.5" r="4" fill="#e6f4fb" stroke="#2b7fb0" stroke-width="1.4"/><path d="M11 11.5 L15 15.5" stroke="#777" stroke-width="2"/></svg>
<svg class="abs" style="left:1228px;top:184px" width="19" height="19" viewBox="0 0 19 19"><circle cx="7" cy="7" r="5.5" fill="#e6f4fb" stroke="#2b7fb0" stroke-width="1.4"/><path d="M4.5 7 H9.5 M7 4.5 V9.5" stroke="#2b7fb0" stroke-width="1.6"/><path d="M11 11 L16 16" stroke="#777" stroke-width="2.2"/></svg>
<svg class="abs" style="left:1254px;top:184px" width="19" height="19" viewBox="0 0 19 19"><circle cx="7" cy="7" r="5.5" fill="#e6f4fb" stroke="#2b7fb0" stroke-width="1.4"/><path d="M4.5 7 H9.5" stroke="#2b7fb0" stroke-width="1.6"/><path d="M11 11 L16 16" stroke="#777" stroke-width="2.2"/></svg>
<svg class="abs" style="left:1280px;top:184px" width="19" height="19" viewBox="0 0 19 19"><rect x="1.5" y="1.5" width="15" height="15" fill="#e6f4fb" stroke="#888"/><path d="M3 15 L15 3 L15 15Z" fill="#2b7fb0"/></svg>
<svg class="abs" style="left:1307px;top:184px" width="19" height="19" viewBox="0 0 19 19"><circle cx="6" cy="12" r="5" fill="#ccc"/><path d="M8 4 L12 1 H17 V10 L13 13 H8Z" fill="#ddd" stroke="#bbb" stroke-width=".6"/><path d="M15 18 L18 15 V18Z" fill="#333"/></svg>
<svg class="abs" style="left:1333px;top:184px" width="19" height="19" viewBox="0 0 19 19"><path d="M2 5 L5 2 H16 V13 L13 16 H2Z" fill="#fff" stroke="#6aa8cc"/><path d="M13 5 L16 2 V13 L13 16Z" fill="#9fd3ec"/><path d="M15 18 L18 15 V18Z" fill="#333"/></svg>
<svg class="abs" style="left:1359px;top:184px" width="19" height="19" viewBox="0 0 19 19"><path d="M1.5 7 L5 2 H13 L16.5 7 L13 15 H5Z" fill="#d6eef8" stroke="#2b7fb0"/><rect x="9" y="9" width="6" height="7" fill="#fff" stroke="#555" stroke-width=".8"/><path d="M15 18 L18 15 V18Z" fill="#333"/></svg>
<svg class="abs" style="left:1385px;top:184px" width="19" height="19" viewBox="0 0 19 19"><rect x="1" y="1" width="12" height="14" fill="#fff" stroke="#888" stroke-width=".8"/><path d="M1 5 H13 M1 9 H13 M5 1 V15" stroke="#aaa" stroke-width=".6"/><rect x="8" y="9" width="10" height="8" rx="1" fill="#333"/><circle cx="13" cy="13" r="2.2" fill="#fff"/></svg>
<svg class="abs" style="left:1411px;top:184px" width="19" height="19" viewBox="0 0 19 19"><path d="M2 5 L7 2 H17 L15 12 L10 16 H4Z" fill="#bfe6f5" stroke="#2b7fb0"/><path d="M7 2 L10 16" stroke="#2b7fb0" stroke-width=".8"/></svg>
<svg class="abs" style="left:1437px;top:184px" width="19" height="19" viewBox="0 0 19 19"><path d="M2 16 L16 2" stroke="#2b7fb0" stroke-width="1.5"/><path d="M16 2 V16 H2" fill="none" stroke="#999" stroke-dasharray="1 1"/><path d="M3 16 L16 3 V16Z" fill="#d6eef8"/><path d="M15 18 L18 15 V18Z" fill="#333"/></svg>
<svg class="abs" style="left:1463px;top:184px" width="19" height="19" viewBox="0 0 19 19"><g stroke="#8a6a2a" stroke-width="1.3"><path d="M1 1 L4 4 M4 1 L1 4 M9 3 L7 7"/></g><path d="M7 10 V16 H14 M7 16 L4 18" fill="none" stroke="#8a6a2a" stroke-width="1.3"/><path d="M12 14 L15 16 L12 18" fill="none" stroke="#333"/><path d="M15 18 L18 15 V18Z" fill="#333"/></svg>
<svg class="abs" style="left:1489px;top:184px" width="19" height="19" viewBox="0 0 19 19"><rect x="1" y="1" width="11" height="7" fill="#fdf3d6" stroke="#999" stroke-width=".8"/><path d="M14 3 V9 M11.5 7 L14 10 L16.5 7" fill="none" stroke="#333" stroke-width="1.1"/><ellipse cx="11" cy="15" rx="5" ry="2.5" fill="#333"/><circle cx="11" cy="15" r="1.2" fill="#fff"/></svg>
<svg class="abs" style="left:1515px;top:184px" width="19" height="19" viewBox="0 0 19 19"><path d="M4 4 L9 10 L16 8 M9 10 L5 16" stroke="#555" stroke-width="1.3"/><circle cx="4" cy="4" r="2.5" fill="#5bb85b"/><circle cx="16" cy="8" r="2.5" fill="#e05050"/><circle cx="5" cy="16" r="2.5" fill="#2b8cc4"/></svg>
<svg class="abs" style="left:1541px;top:184px" width="19" height="19" viewBox="0 0 19 19"><path d="M9 1 L17 15 H1Z" fill="none" stroke="#bbb" stroke-width="2"/><path d="M12 10 L17 14 L12 17Z" fill="#ccc"/></svg>
<svg class="abs" style="left:1566px;top:184px" width="19" height="19" viewBox="0 0 19 19"><rect x="4" y="3" width="3.5" height="12" fill="#888"/><rect x="10.5" y="3" width="3.5" height="12" fill="#888"/></svg>
<svg class="abs" style="left:1593px;top:184px" width="19" height="19" viewBox="0 0 19 19"><path d="M1 5 H14 Q17 9 14 13 H1 Q4 9 1 5Z" fill="#ddd"/></svg>

</body></html>
